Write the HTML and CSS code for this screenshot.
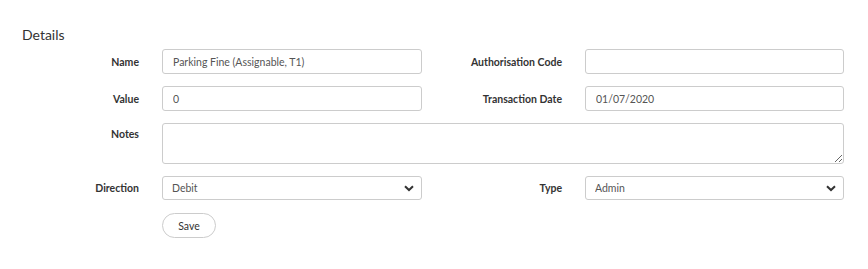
FILE: index.html
```html
<!DOCTYPE html>
<html>
<head>
<title>Details</title>
<meta charset="UTF-8">
<link rel="stylesheet" href="styles.css">
</head>
<body>
<div class="panel">
  <div class="panel-title">Details</div>
  <form class="details-form">
    <label class="field-label">Name</label>
    <input class="field-input" type="text" value="Parking Fine (Assignable, T1)">
    <label class="field-label">Authorisation Code</label>
    <input class="field-input" type="text" value="">

    <label class="field-label">Value</label>
    <input class="field-input" type="text" value="0">
    <label class="field-label">Transaction Date</label>
    <input class="field-input" type="text" value="01/07/2020">

    <label class="field-label label-top">Notes</label>
    <textarea class="field-input field-notes"></textarea>

    <label class="field-label">Direction</label>
    <div class="select-wrap">
      <select class="field-input field-select">
        <option>Debit</option>
        <option>Credit</option>
      </select>
      <svg class="select-arrow" width="10" height="7" viewBox="0 0 10 7"><path d="M1 1.2 L5 5 L9 1.2" fill="none" stroke="#333" stroke-width="2"/></svg>
    </div>
    <label class="field-label">Type</label>
    <div class="select-wrap">
      <select class="field-input field-select">
        <option>Admin</option>
      </select>
      <svg class="select-arrow" width="10" height="7" viewBox="0 0 10 7"><path d="M1 1.2 L5 5 L9 1.2" fill="none" stroke="#333" stroke-width="2"/></svg>
    </div>

    <div class="form-actions">
      <button type="button" class="btn-save">Save</button>
    </div>
  </form>
</div>
</body>
</html>
```

FILE: styles.css
```css
body {
 margin: 0;
 background: #ffffff;
 font-family: Lato, "Open Sans", Arial, sans-serif;
 color: #333333;
}
.panel {
 padding: 26px 24px 0 0;
}
.panel-title {
 margin-left: 22px;
 font-size: 14px;
 color: #333333;
 line-height: 18px;
 height: 23px;
}
.details-form {
 display: grid;
 grid-template-columns: 139px 260px 117px 259px;
 column-gap: 23px;
 row-gap: 12px;
 align-items: center;
}
.field-label {
 text-align: right;
 font-size: 10.5px;
 font-weight: bold;
 color: #333333;
}
.label-top {
 align-self: start;
 padding-top: 5px;
}
.field-input {
 box-sizing: border-box;
 height: 25px;
 width: 100%;
 margin: 0;
 border: 1px solid #cccccc;
 border-radius: 3px;
 padding: 0 10px;
 font-family: Lato, "Open Sans", Arial, sans-serif;
 font-size: 10.5px;
 color: #555555;
 background: #ffffff;
 outline: none;
}
.field-notes {
 grid-column: 2 / 5;
 height: 41px;
 padding: 6px 10px;
 resize: vertical;
}
.select-wrap {
 position: relative;
}
.field-select {
 height: 24px;
 -webkit-appearance: none;
 appearance: none;
 padding-left: 9px;
}
.select-arrow {
 position: absolute;
 right: 8px;
 top: 9px;
 pointer-events: none;
}
.form-actions {
 grid-column: 2 / 5;
 padding-top: 1px;
}
.btn-save {
 box-sizing: border-box;
 width: 54px;
 height: 25px;
 border: 1px solid #cccccc;
 border-radius: 13px;
 background: #ffffff;
 font-family: Lato, "Open Sans", Arial, sans-serif;
 font-size: 10.5px;
 color: #333333;
 padding: 0;
}
```
